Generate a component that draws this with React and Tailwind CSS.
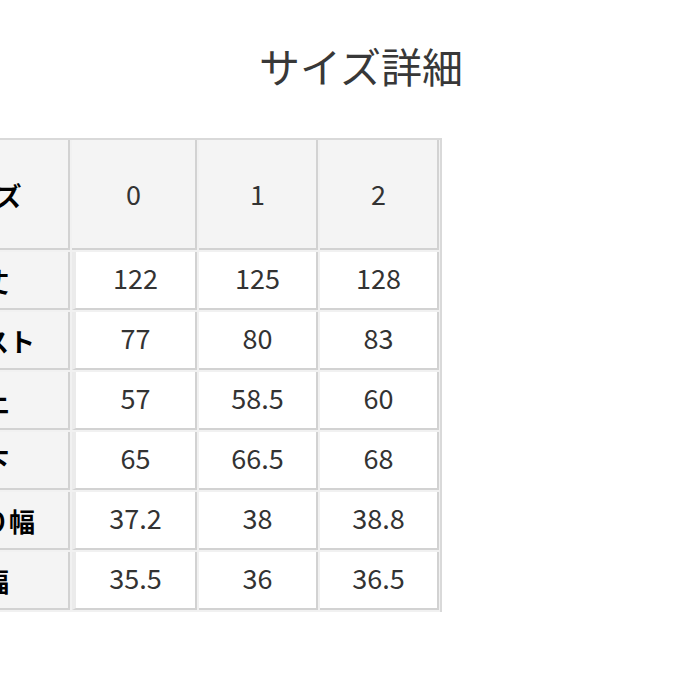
import React from 'react';

const FONT = { fontFamily: '"Noto Sans CJK JP", "Noto Sans", sans-serif' };

const cols = ['0', '1', '2'];

const rows = [
  { label: '着丈', values: ['122', '125', '128'] },
  { label: 'ウエスト', values: ['77', '80', '83'] },
  { label: '股上', values: ['57', '58.5', '60'] },
  { label: '股下', values: ['65', '66.5', '68'] },
  { label: 'わたり幅', values: ['37.2', '38', '38.8'] },
  { label: '裾幅', values: ['35.5', '36', '36.5'] },
];

const App = () => {
  return (
    <div className="w-[685px] h-[685px] bg-white overflow-hidden" style={FONT}>
      {/* Title */}
      <div className="flex justify-center pt-[39px] pl-[37px]">
        <h1 className="text-[41px] leading-[52px] font-normal text-[#383838]">サイズ詳細</h1>
      </div>

      {/* Size table, first column runs off the left edge */}
      <div className="ml-[-104px] mt-[47px] w-[546px] bg-[#f1f1f1] border-t-2 border-r-2 border-[#d9d9d9] pl-[2px] pr-[1px] pb-[2px]">
        <div className="grid grid-cols-[172px_125px_119px_119px] gap-x-[2px] gap-y-[2px]">
          {/* Header row */}
          <div className="h-[110px] flex items-center justify-center bg-[#f4f4f4] border-r-2 border-b-2 border-[#d2d2d2] text-[26px] font-bold text-black">
            サイズ
          </div>
          {cols.map((c) => (
            <div
              key={c}
              className="h-[110px] flex items-center justify-center bg-[#f4f4f4] border-r-2 border-b-2 border-[#d2d2d2] text-[27px] text-[#333333]"
            >
              {c}
            </div>
          ))}

          {/* Data rows */}
          {rows.map((r) => (
            <React.Fragment key={r.label}>
              <div className="h-[58px] flex items-center justify-center bg-[#f4f4f4] border-r-2 border-b-2 border-[#d2d2d2] text-[26px] font-bold text-black">
                {r.label}
              </div>
              {r.values.map((v, i) => (
                <div
                  key={i}
                  className={
                    i === 0
                      ? 'h-[58px] flex items-center justify-center pb-[3px] bg-white border-l-4 border-l-[#ebebeb] border-r-2 border-b-2 border-r-[#d2d2d2] border-b-[#d2d2d2] text-[27px] text-[#333333]'
                      : 'h-[58px] flex items-center justify-center pb-[3px] bg-white border-r-2 border-b-2 border-[#d2d2d2] text-[27px] text-[#333333]'
                  }
                >
                  {v}
                </div>
              ))}
            </React.Fragment>
          ))}
        </div>
      </div>
    </div>
  );
};

export default App;
